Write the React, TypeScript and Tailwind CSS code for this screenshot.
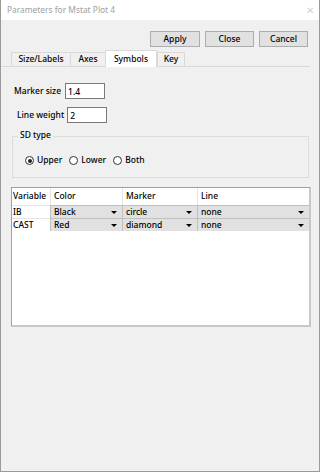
import React, { useState } from 'react';

const font = { fontFamily: '"Noto Sans", "Open Sans", sans-serif' };

interface Row {
  variable: string;
  color: string;
  marker: string;
  line: string;
}

const rows: Row[] = [
  { variable: 'IB', color: 'Black', marker: 'circle', line: 'none' },
  { variable: 'CAST', color: 'Red', marker: 'diamond', line: 'none' },
];

const Arrow = () => (
  <svg width="6" height="3" viewBox="0 0 6 3" className="shrink-0">
    <path d="M0 0H6L3 3Z" fill="#000" />
  </svg>
);

const Combo = ({ value }: { value: string }) => (
  <div className="flex h-full items-center justify-between bg-[#e1e1e1] pl-[3px] pr-[5px]">
    <span>{value}</span>
    <Arrow />
  </div>
);

const Radio = ({ label, checked, onClick }: { label: string; checked: boolean; onClick: () => void }) => (
  <label className="flex items-center gap-[3px]" onClick={onClick}>
    <span className="flex h-[9px] w-[9px] items-center justify-center rounded-full border border-[#333] bg-white">
      {checked && <span className="h-[4px] w-[4px] rounded-full bg-[#222]" />}
    </span>
    <span>{label}</span>
  </label>
);

const tabs = [
  { name: 'Size/Labels', w: 'w-[59px]' },
  { name: 'Axes', w: 'w-[35px]' },
  { name: 'Symbols', w: 'w-[52px]' },
  { name: 'Key', w: 'w-[28px]' },
];

export default function App() {
  const [sd, setSd] = useState('Upper');
  const [tab] = useState('Symbols');

  return (
    <div className="flex h-[472px] w-[320px] flex-col border-x border-b border-[#9a9a9a] bg-[#f0f0f0] text-[8.5px] font-medium leading-none text-black" style={font}>
      {/* Title bar */}
      <div className="flex h-[20px] shrink-0 items-center justify-between bg-white pl-[6px] pr-[5px] text-[8.4px] font-normal text-[#a0a0a0]">
        <span>Parameters for Mstat Plot 4</span>
        <span className="text-[10px] text-[#d0d0d0]">✕</span>
      </div>

      {/* Buttons */}
      <div className="flex justify-end gap-[5px] pr-[11px] pt-[11px]">
        {['Apply', 'Close', 'Cancel'].map((b, i) => (
          <button
            key={b}
            className={`h-[16px] border border-[#adadad] bg-[#e1e1e1] leading-none ${i === 0 ? 'w-[50px]' : 'w-[49px]'}`}
          >
            {b}
          </button>
        ))}
      </div>

      {/* Tabs */}
      <div className="mr-[9px] mt-[4px] flex h-[16px] items-end border-b border-[#d9d9d9] pl-[10px]">
        {tabs.map((t) => (
          <div
            key={t.name}
            className={
              t.name === tab
                ? `relative -mb-px flex h-[17px] items-center justify-center border-x border-t border-[#d9d9d9] bg-white ${t.w}`
                : `flex h-[14px] items-center justify-center border-l border-t border-[#d9d9d9] last:border-r ${t.w}`
            }
          >
            {t.name}
          </div>
        ))}
      </div>

      {/* Content */}
      <div className="flex flex-col pl-[11px] pr-[8px]">
        <div className="mt-[16px] flex items-center gap-[4px] pl-[2px]">
          <span>Marker size</span>
          <input className="h-[16px] w-[40px] border border-[#7a7a7a] bg-white px-[2px] outline-none" defaultValue="1.4" />
        </div>
        <div className="mt-[8px] flex items-center gap-[3px] pl-[5px]">
          <span>Line weight</span>
          <input className="h-[16px] w-[40px] border border-[#7a7a7a] bg-white px-[2px] outline-none" defaultValue="2" />
        </div>

        {/* SD type */}
        <div className="relative mr-[2px] mt-[13px] h-[42px] border border-[#dcdcdc]">
          <span className="absolute -top-[6px] left-[5px] bg-[#f0f0f0] px-[2px]">SD type</span>
          <div className="flex items-center gap-[7px] pl-[12px] pt-[19px]">
            {['Upper', 'Lower', 'Both'].map((r) => (
              <Radio key={r} label={r} checked={sd === r} onClick={() => setSd(r)} />
            ))}
          </div>
        </div>

        {/* Table */}
        <div className="-ml-[1px] mt-[9px] h-[140px] border border-b-2 border-r-2 border-[#a0a0a0] border-b-[#c8c8c8] border-r-[#c8c8c8] bg-white">
          <div className="grid grid-cols-[38px_72px_75px_1fr]">
            <div className="flex h-[17px] items-center pl-[1px]">Variable</div>
            <div className="flex h-[17px] items-center border-l border-[#e6e6e6] pl-[3px]">Color</div>
            <div className="flex h-[17px] items-center border-l border-[#e6e6e6] pl-[3px]">Marker</div>
            <div className="flex h-[17px] items-center border-l border-[#e6e6e6] pl-[3px]">Line</div>
            {rows.map((r) => (
              <React.Fragment key={r.variable}>
                <div className="flex h-[13px] items-center border-t border-[#e6e6e6] pl-[1px]">{r.variable}</div>
                <div className="h-[13px] border-l border-t border-[#c0c0c0]"><Combo value={r.color} /></div>
                <div className="h-[13px] border-l border-t border-[#c0c0c0]"><Combo value={r.marker} /></div>
                <div className="h-[13px] border-l border-t border-[#c0c0c0]"><Combo value={r.line} /></div>
              </React.Fragment>
            ))}
          </div>
        </div>
      </div>
    </div>
  );
}
